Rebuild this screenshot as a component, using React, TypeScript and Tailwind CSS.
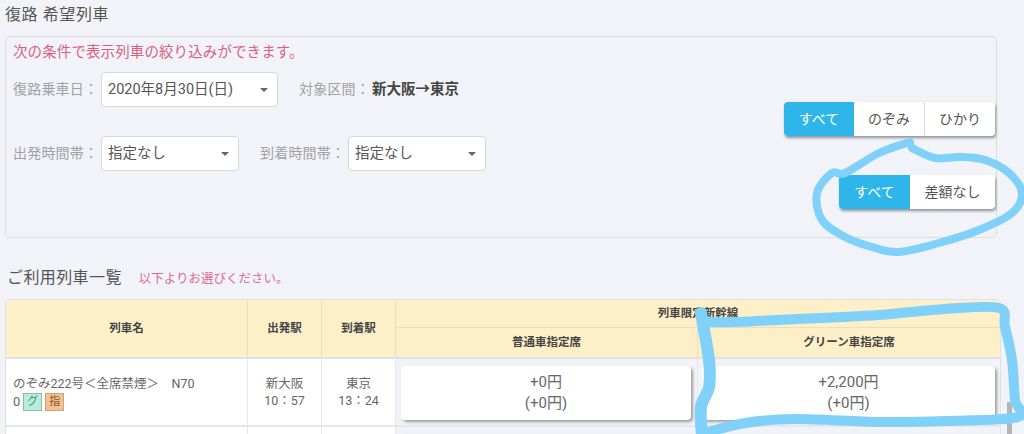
import React from 'react';

const font = "font-['Roboto','Noto_Sans_CJK_JP',sans-serif]";

const smooth = (pts: number[][]) => {
  let d = `M${pts[0][0]} ${pts[0][1]}`;
  for (let i = 0; i < pts.length - 1; i++) {
    const p0 = pts[i - 1] || pts[i];
    const p1 = pts[i];
    const p2 = pts[i + 1];
    const p3 = pts[i + 2] || p2;
    d += ` C${p1[0] + (p2[0] - p0[0]) / 6} ${p1[1] + (p2[1] - p0[1]) / 6} ${p2[0] - (p3[0] - p1[0]) / 6} ${p2[1] - (p3[1] - p1[1]) / 6} ${p2[0]} ${p2[1]}`;
  }
  return d;
};

const circle = [[910, 142], [879, 153], [845, 173], [832, 173], [817, 193], [822, 220], [845, 237], [872, 247], [899, 252], [939, 243], [979, 230], [1012, 213], [1022, 193], [1009, 173], [985, 160], [959, 157], [935, 158], [912, 148]];
const box = [[701, 313], [712, 322], [798, 319], [879, 315], [945, 309], [999, 308], [1005, 327], [1012, 360], [1015, 400], [1018, 417], [945, 421], [879, 422], [795, 419], [745, 423], [705, 433]];
const boxLeft = [[701, 313], [709, 360], [709, 387], [701, 407], [702, 436]];

const Select = ({ label, width }: { label: string; width: string }) => (
  <div className={`${width} h-[35px] flex items-center justify-between pl-[6px] pr-[9px] bg-white border border-[#d5d7dc] rounded-[4px] text-[14.5px] text-[#555]`}>
    <span>{label}</span>
    <span className="w-0 h-0 border-x-[4px] border-x-transparent border-t-[4px] border-t-[#666]" />
  </div>
);

const Toggle = ({ items }: { items: { label: string; width: string }[] }) => (
  <div className="flex h-[34px] rounded-[4px] bg-white shadow-[1px_2px_3px_rgba(0,0,0,0.4)] text-[14px] text-[#555] overflow-hidden">
    {items.map((item, i) => (
      <div
        key={item.label}
        className={`${item.width} flex items-center justify-center ${i === 0 ? 'bg-[#2eb6ea] text-white' : ''} ${i === 2 ? 'border-l border-[#d8d8d8]' : ''}`}
      >
        {item.label}
      </div>
    ))}
  </div>
);

const Price = ({ main, sub, width }: { main: string; sub: string; width: string }) => (
  <div className={`${width} h-[54px] mt-[7px] flex flex-col items-center justify-center bg-white rounded-[4px] shadow-[2px_2px_3px_rgba(0,0,0,0.35)] text-[15px] leading-[21px] text-[#666]`}>
    <div>{main}</div>
    <div>{sub}</div>
  </div>
);

const Row = ({ name, dep, arr, price }: { name?: boolean; dep?: string[]; arr?: string[]; price?: string }) => (
  <div className="grid grid-cols-[241px_74px_74px_302px_1fr] h-[68px] border-b-2 border-[#e6e7eb] text-[#666]">
    <div className="bg-white pl-[7px] pt-[16px] text-[12.5px] leading-[18px]">
      {name && (
        <>
          <div>のぞみ222号＜全席禁煙＞　N70</div>
          <div className="flex items-center gap-[3px]">
            <span className="text-[13px]">0</span>
            <span className="flex w-[19px] h-[18px] items-center justify-center bg-[#b5efdc] border border-[#9db5ab] text-[11px] text-[#4a8a74]">グ</span>
            <span className="flex w-[19px] h-[18px] items-center justify-center bg-[#f9bf8f] border border-[#c4a389] text-[11px] text-[#7a5a30]">指</span>
          </div>
        </>
      )}
    </div>
    <div className="bg-white border-l border-[#e6e7eb] flex flex-col items-center justify-center text-[12.5px] leading-[17px]">
      {dep?.map((t) => <div key={t}>{t}</div>)}
    </div>
    <div className="bg-white border-l border-[#e6e7eb] flex flex-col items-center justify-center text-[12.5px] leading-[17px]">
      {arr?.map((t) => <div key={t}>{t}</div>)}
    </div>
    <div className="border-l border-[#e6e7eb] pl-[5px]">
      <Price main={price ? '+0円' : ''} sub={price ? '(+0円)' : ''} width="w-[290px]" />
    </div>
    <div className="border-l border-[#e6e7eb] pl-[4px]">
      <Price main={price || ''} sub={price ? '(+0円)' : ''} width="w-[293px]" />
    </div>
  </div>
);

export default function App() {
  return (
    <div className={`relative h-[434px] w-[1024px] overflow-hidden bg-[#f2f3f8] ${font}`}>
      <div className="pl-[5px] pr-[27px] pt-[3px]">
        <h2 className="text-[16px] leading-[24px] text-[#555] tracking-[0.6px]">復路 希望列車</h2>
        <div className="mt-[9px] h-[202px] border border-[#dcdde2] rounded-[5px] pl-[7px] pt-[6px]">
          <p className="text-[14.5px] leading-[20px] tracking-[0.1px] text-[#dc5f7e]">次の条件で表示列車の絞り込みができます。</p>
          <div className="mt-[9px] flex items-center text-[14px] text-[#a0a1a5]">
            <span className="w-[88px] tracking-[0.2px]">復路乗車日：</span>
            <Select label="2020年8月30日(日)" width="w-[177px]" />
            <span className="ml-[21px] tracking-[0.2px]">対象区間：</span>
            <span className="ml-[2px] text-[14.5px] font-bold text-[#444]">新大阪→東京</span>
          </div>
          <div className="mt-[29px] flex items-center text-[14px] text-[#a0a1a5]">
            <span className="w-[88px] tracking-[0.2px]">出発時間帯：</span>
            <Select label="指定なし" width="w-[138px]" />
            <span className="w-[109px] pl-[21px] tracking-[0.2px]">到着時間帯：</span>
            <Select label="指定なし" width="w-[138px]" />
          </div>
          <div className="-mt-[69px] flex flex-col items-end gap-[39px] pr-[1px]">
            <Toggle items={[{ label: 'すべて', width: 'w-[70px]' }, { label: 'のぞみ', width: 'w-[70px]' }, { label: 'ひかり', width: 'w-[71px]' }]} />
            <Toggle items={[{ label: 'すべて', width: 'w-[71px]' }, { label: '差額なし', width: 'w-[85px]' }]} />
          </div>
        </div>

        <div className="mt-[28px] flex items-baseline pl-[2px]">
          <h2 className="text-[16px] leading-[24px] text-[#555] tracking-[0.4px]">ご利用列車一覧</h2>
          <span className="ml-[17px] text-[12.5px] text-[#dd6a90]">以下よりお選びください。</span>
        </div>

        <div className="mt-[9px] w-[996px] rounded-[5px] overflow-hidden border-t border-x border-[#e0e1e5]">
          <div className="grid grid-cols-[241px_74px_74px_302px_1fr] grid-rows-[28px_29px] bg-[#fdefc7] text-[11.5px] font-bold text-[#444] border-b-2 border-[#e0e1e5]">
            <div className="row-span-2 flex items-center justify-center">列車名</div>
            <div className="row-span-2 flex items-center justify-center border-l border-[#eadfba]">出発駅</div>
            <div className="row-span-2 flex items-center justify-center border-l border-[#eadfba]">到着駅</div>
            <div className="col-span-2 flex items-center justify-center border-l border-b border-[#eadfba]">列車限定新幹線</div>
            <div className="flex items-center justify-center border-l border-[#eadfba]">普通車指定席</div>
            <div className="flex items-center justify-center border-l border-[#eadfba]">グリーン車指定席</div>
          </div>
          <Row name dep={['新大阪', '10：57']} arr={['東京', '13：24']} price="+2,200円" />
          <Row />
        </div>
      </div>

      {/* scrollbar thumb, partly under the pen marks */}
      <div className="absolute right-[12px] top-[402px] h-[32px] w-[5px] bg-[#b4b5b9]" />

      {/* hand drawn marks on top of the screenshot */}
      <svg className="absolute inset-0 pointer-events-none" width="1024" height="434" fill="none" stroke="#7fd1f9" strokeWidth="10" strokeLinecap="round" strokeLinejoin="round">
        <path d={smooth(circle)} strokeWidth="8" />
        <path d={smooth(box)} />
        <path d={smooth(boxLeft)} strokeWidth="12" />
      </svg>
    </div>
  );
}
